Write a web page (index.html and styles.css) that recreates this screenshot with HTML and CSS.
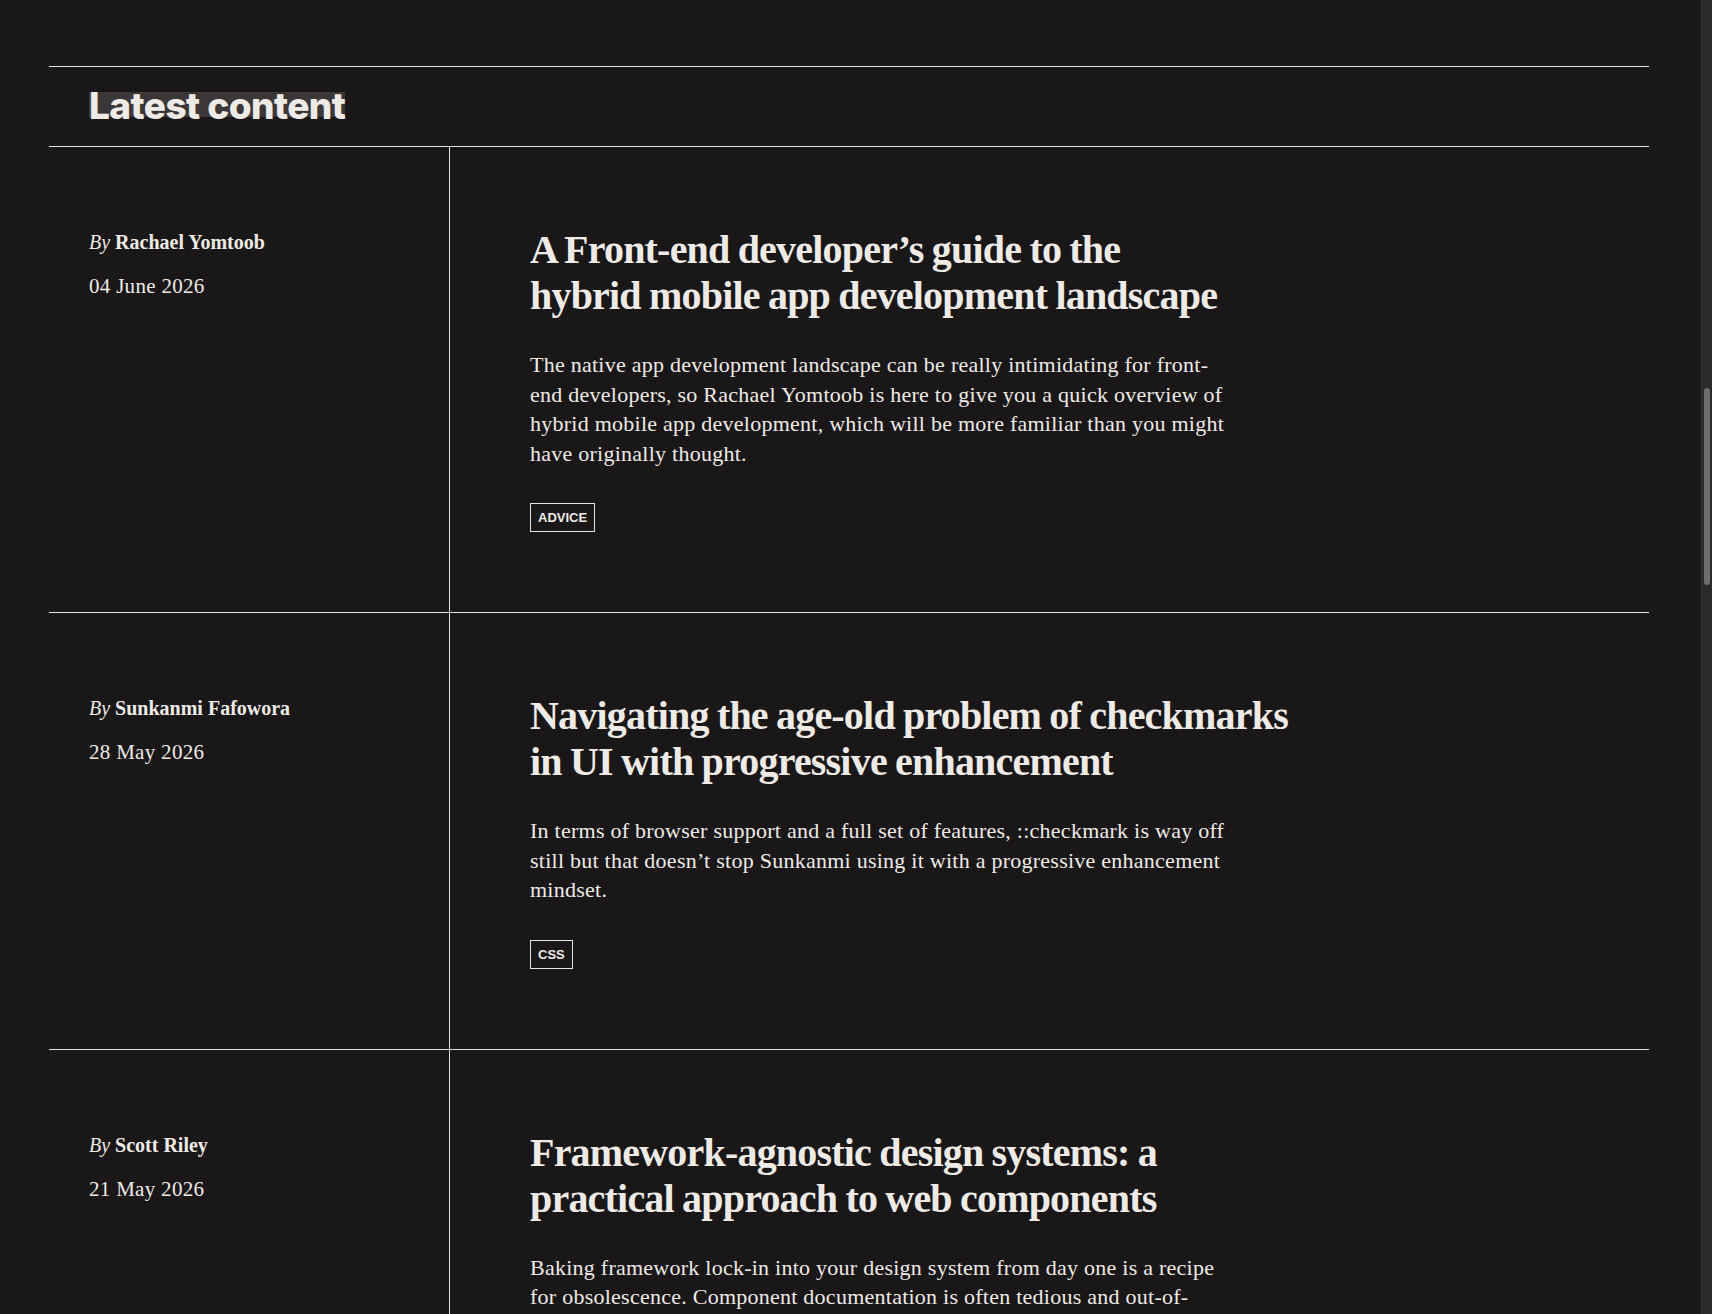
FILE: index.html
```html
<!DOCTYPE html>
<html lang="en">
<head>
    <meta charset="UTF-8">
    <meta name="viewport" content="width=device-width, initial-scale=1.0">
    <title>Latest content</title>
    <link rel="stylesheet" href="styles.css">
</head>
<body>
    <section class="latest">
        <header class="latest-header">
            <h2><span class="marker">Latest content</span></h2>
        </header>

        <!-- Post 1 -->
        <article class="post">
            <div class="post-meta">
                <p class="byline"><em>By</em> <strong>Rachael Yomtoob</strong></p>
                <p class="date">04 June 2026</p>
            </div>
            <div class="post-body">
                <h3 class="post-title"><a href="#">A Front-end developer’s guide to the hybrid mobile app development landscape</a></h3>
                <p class="excerpt">The native app development landscape can be really intimidating for front-end developers, so Rachael Yomtoob is here to give you a quick overview of hybrid mobile app development, which will be more familiar than you might have originally thought.</p>
                <ul class="tags">
                    <li><a href="#" class="tag">Advice</a></li>
                </ul>
            </div>
        </article>

        <!-- Post 2 -->
        <article class="post">
            <div class="post-meta">
                <p class="byline"><em>By</em> <strong>Sunkanmi Fafowora</strong></p>
                <p class="date">28 May 2026</p>
            </div>
            <div class="post-body">
                <h3 class="post-title"><a href="#">Navigating the age-old problem of checkmarks in UI with progressive enhancement</a></h3>
                <p class="excerpt">In terms of browser support and a full set of features, ::checkmark is way off still but that doesn’t stop Sunkanmi using it with a progressive enhancement mindset.</p>
                <ul class="tags">
                    <li><a href="#" class="tag">CSS</a></li>
                </ul>
            </div>
        </article>

        <!-- Post 3 -->
        <article class="post">
            <div class="post-meta">
                <p class="byline"><em>By</em> <strong>Scott Riley</strong></p>
                <p class="date">21 May 2026</p>
            </div>
            <div class="post-body">
                <h3 class="post-title"><a href="#">Framework-agnostic design systems: a practical approach to web components</a></h3>
                <p class="excerpt">Baking framework lock-in into your design system from day one is a recipe for obsolescence. Component documentation is often tedious and out-of-date, so Scott shows how web components keep your system portable.</p>
                <ul class="tags">
                    <li><a href="#" class="tag">Design systems</a></li>
                </ul>
            </div>
        </article>
    </section>

    <!-- scrollbar as seen in the page -->
    <div class="scroll-track"><div class="scroll-thumb"></div></div>
</body>
</html>
```

FILE: styles.css
```css
html {
    color-scheme: dark;
}
body {
    margin: 0;
    padding-right: 14px;
    background-color: #1a1718;
    color: #eeebe6;
    font-family: 'Liberation Serif', serif;
}
a {
    color: inherit;
    text-decoration: none;
}
.latest {
    max-width: 1600px;
    margin: 66px auto 0;
    border-top: 1px solid #e6e3de;
}
.latest-header {
    padding: 20px 40px 22px;
    border-bottom: 1px solid #e6e3de;
}
.latest-header h2 {
    margin: 0;
    font-family: 'Inter', 'Liberation Sans', sans-serif;
    font-weight: 800;
    font-size: 37px;
    line-height: 37px;
    letter-spacing: -0.015em;
}
.marker {
    background: linear-gradient(to bottom, transparent 9px, #3b3638 9px, #3b3638 34px, transparent 34px);
}
.post {
    display: grid;
    grid-template-columns: 401px 1fr;
    border-bottom: 1px solid #e6e3de;
}
.post-meta {
    border-right: 1px solid #e6e3de;
    padding: 82px 40px 80px;
}
.byline {
    margin: 0;
    font-size: 20px;
    line-height: 26px;
}
.byline em {
    font-weight: normal;
}
.date {
    margin: 18px 0 0;
    font-size: 21px;
    line-height: 26px;
    letter-spacing: 0.3px;
}
.post-body {
    padding: 80px 80px 80px;
}
.post-title {
    margin: 0;
    max-width: 820px;
    font-size: 40px;
    line-height: 46px;
    font-weight: bold;
    letter-spacing: -0.02em;
    word-spacing: -1px;
    text-wrap: balance;
}
.excerpt {
    margin: 31px 0 0;
    max-width: 700px;
    font-size: 22px;
    line-height: 29.5px;
    letter-spacing: 0.25px;
}
.tags {
    list-style: none;
    margin: 35px 0 0;
    padding: 0;
    display: flex;
    gap: 8px;
}
.tag {
    display: inline-block;
    border: 1px solid #e6e3de;
    padding: 0 7px;
    font-family: 'Liberation Sans', sans-serif;
    font-weight: bold;
    font-size: 13px;
    line-height: 27px;
    text-transform: uppercase;
}
.scroll-track {
    position: fixed;
    top: 0;
    right: 0;
    bottom: 0;
    width: 10px;
    background: #2b2a2b;
    border-left: 1px solid #3a393a;
}
.scroll-thumb {
    position: absolute;
    top: 388px;
    left: 2px;
    width: 6px;
    height: 197px;
    border-radius: 3px;
    background: #6e6e6e;
}
```
